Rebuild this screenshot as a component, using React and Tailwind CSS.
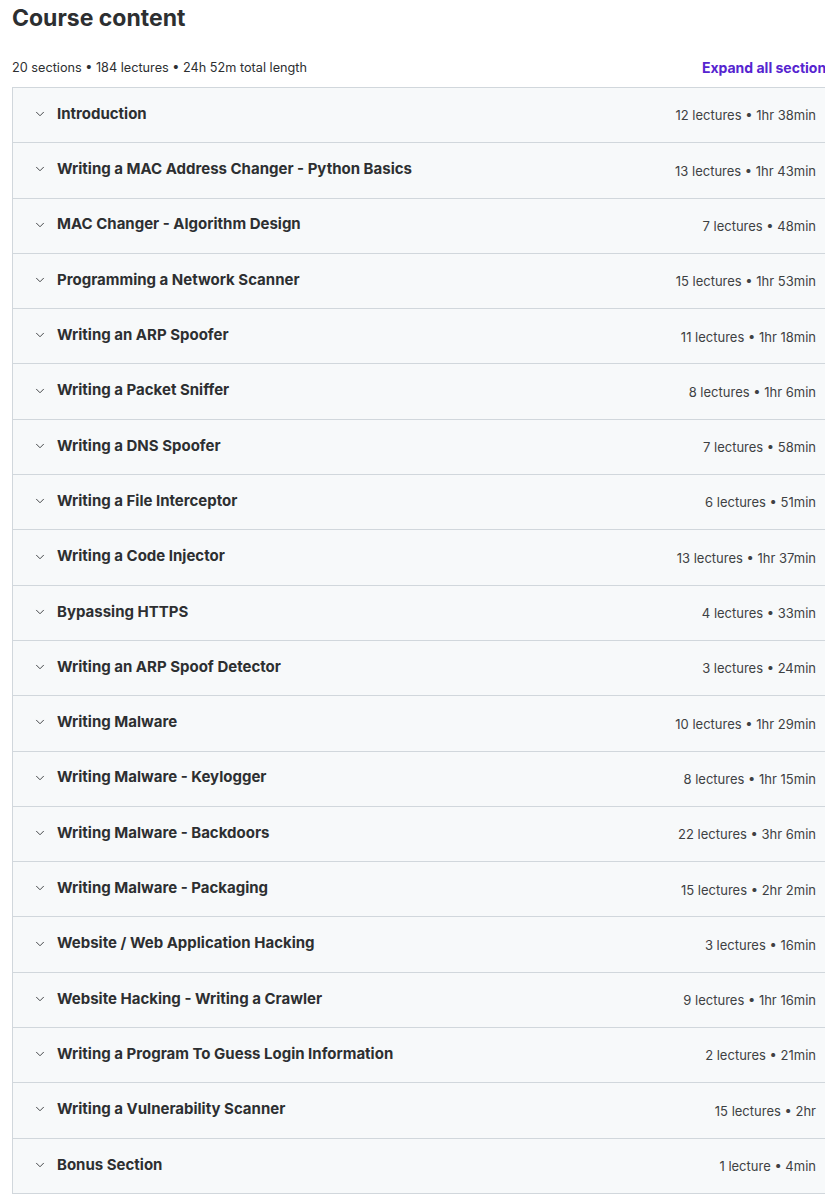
import { ChevronDown } from 'lucide-react';

const sections = [
  ['Introduction', '12 lectures • 1hr 38min'],
  ['Writing a MAC Address Changer - Python Basics', '13 lectures • 1hr 43min'],
  ['MAC Changer - Algorithm Design', '7 lectures • 48min'],
  ['Programming a Network Scanner', '15 lectures • 1hr 53min'],
  ['Writing an ARP Spoofer', '11 lectures • 1hr 18min'],
  ['Writing a Packet Sniffer', '8 lectures • 1hr 6min'],
  ['Writing a DNS Spoofer', '7 lectures • 58min'],
  ['Writing a File Interceptor', '6 lectures • 51min'],
  ['Writing a Code Injector', '13 lectures • 1hr 37min'],
  ['Bypassing HTTPS', '4 lectures • 33min'],
  ['Writing an ARP Spoof Detector', '3 lectures • 24min'],
  ['Writing Malware', '10 lectures • 1hr 29min'],
  ['Writing Malware - Keylogger', '8 lectures • 1hr 15min'],
  ['Writing Malware - Backdoors', '22 lectures • 3hr 6min'],
  ['Writing Malware - Packaging', '15 lectures • 2hr 2min'],
  ['Website / Web Application Hacking', '3 lectures • 16min'],
  ['Website Hacking - Writing a Crawler', '9 lectures • 1hr 16min'],
  ['Writing a Program To Guess Login Information', '2 lectures • 21min'],
  ['Writing a Vulnerability Scanner', '15 lectures • 2hr'],
  ['Bonus Section', '1 lecture • 4min'],
];

function SectionRow({ title, meta }) {
  return (
    <div className="flex h-[55.3px] items-center justify-between border-t border-[#d1d7dc] bg-[#f7f9fa] pb-[2px] pl-[20px] pr-[17px]">
      <div className="flex items-center gap-[10px]">
        <ChevronDown className="h-[14px] w-[14px] text-[#2d2f31]" strokeWidth={1.5} />
        <span className="text-[15px] font-bold text-[#2d2f31]">{title}</span>
      </div>
      <span className="pt-[4px] text-[13px] text-[#3e4143]">{meta}</span>
    </div>
  );
}

export default function App() {
  return (
    <div className="w-[825px] overflow-hidden bg-white" style={{ fontFamily: 'Inter, "Noto Sans", sans-serif' }}>
      <div className="w-[834px] pl-[12px]">
        <h2 className="pt-[2px] text-[23px] font-bold leading-[32px] text-[#2d2f31]">Course content</h2>
        <div className="mt-[23px] flex items-center justify-between pb-[8px]">
          <span className="text-[12.7px] text-[#2d2f31]">20 sections • 184 lectures • 24h 52m total length</span>
          <button className="whitespace-nowrap pb-[1px] pl-[1px] text-[14px] font-bold text-[#5624d0]">Expand all sections</button>
        </div>
        <div className="border-b border-l border-r border-[#d1d7dc]">
          {sections.map(([t, m]) => (
            <SectionRow key={t} title={t} meta={m} />
          ))}
        </div>
      </div>
    </div>
  );
}
